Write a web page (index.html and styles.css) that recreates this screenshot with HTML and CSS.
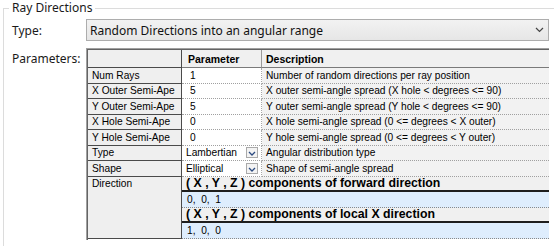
FILE: index.html
```html
<!DOCTYPE html>
<html>
<head>
<meta charset="utf-8">
<link rel="stylesheet" href="styles.css">
</head>
<body>
<fieldset class="group">
  <legend class="legend">Ray Directions</legend>
  <div class="form">
    <div class="lbl">Type:</div>
    <div class="combo">
      <span class="combo-text">Random Directions into an angular range</span>
      <svg class="combo-arrow" width="9" height="6" viewBox="0 0 9 6"><polyline points="1,1 4.5,4.5 8,1" fill="none" stroke="#444" stroke-width="1.2"/></svg>
    </div>
    <div class="lbl lbl-params">Parameters:</div>
    <div class="table">
      <div class="cell hdr rh"></div>
      <div class="cell hdr ph">Parameter</div>
      <div class="cell hdr dh">Description</div>

      <div class="cell rh">Num Rays</div>
      <div class="cell val num">1</div>
      <div class="cell desc">Number of random directions per ray position</div>

      <div class="cell rh">X Outer Semi-Ape</div>
      <div class="cell val num">5</div>
      <div class="cell desc">X outer semi-angle spread (X hole &lt; degrees &lt;= 90)</div>

      <div class="cell rh">Y Outer Semi-Ape</div>
      <div class="cell val num">5</div>
      <div class="cell desc">Y outer semi-angle spread (Y hole &lt; degrees &lt;= 90)</div>

      <div class="cell rh">X Hole Semi-Ape</div>
      <div class="cell val num">0</div>
      <div class="cell desc">X hole semi-angle spread (0 &lt;= degrees &lt; X outer)</div>

      <div class="cell rh">Y Hole Semi-Ape</div>
      <div class="cell val num">0</div>
      <div class="cell desc">Y hole semi-angle spread (0 &lt;= degrees &lt; Y outer)</div>

      <div class="cell rh">Type</div>
      <div class="cell val sel"><span class="sel-text">Lambertian</span><span class="dd"><svg width="8" height="5" viewBox="0 0 8 5"><polyline points="1,1 4,4 7,1" fill="none" stroke="#2b4a80" stroke-width="1.3"/></svg></span></div>
      <div class="cell desc">Angular distribution type</div>

      <div class="cell rh">Shape</div>
      <div class="cell val sel"><span class="sel-text">Elliptical</span><span class="dd"><svg width="8" height="5" viewBox="0 0 8 5"><polyline points="1,1 4,4 7,1" fill="none" stroke="#2b4a80" stroke-width="1.3"/></svg></span></div>
      <div class="cell desc">Shape of semi-angle spread</div>

      <div class="cell rh dir">Direction</div>
      <div class="cell sub">( X , Y , Z ) components of forward direction</div>
      <div class="cell vec">0,&nbsp; 0,&nbsp; 1</div>
      <div class="cell sub">( X , Y , Z ) components of local X direction</div>
      <div class="cell vec">1,&nbsp; 0,&nbsp; 0</div>
    </div>
  </div>
</fieldset>
</body>
</html>
```

FILE: styles.css
```css
html, body {
  margin: 0;
  padding: 0;
  background: #ffffff;
  overflow: hidden;
  width: 554px;
  height: 246px;
}

.group {
  box-sizing: border-box;
  height: 246px;
  margin: 0 0 0 3px;
  padding: 0 0 0 8px;
  border: 1px solid #dcdcdc;
  border-right: none;
  border-bottom: none;
  font-family: "Noto Sans", "Open Sans", sans-serif;
  font-size: 11.5px;
  color: #1a1a1a;
  min-width: 0;
}

.legend {
  margin-left: -3px;
  padding: 0 3px;
  line-height: 16px;
  font-size: 12px;
}

.form {
  display: grid;
  grid-template-columns: 74px 463px;
  grid-template-rows: 22px auto;
  row-gap: 7px;
  margin-top: 3px;
}

.lbl {
  display: flex;
  align-items: center;
  font-size: 12px;
}

.lbl-params {
  align-items: flex-start;
  padding-top: 3px;
  line-height: 16px;
}

.combo {
  box-sizing: border-box;
  height: 22px;
  border: 1px solid #adadad;
  background: linear-gradient(#f2f2f2, #e6e6e6);
  display: flex;
  align-items: center;
  justify-content: space-between;
  padding: 0 4px 0 3px;
  font-size: 12px;
  color: #111;
}

.combo-arrow {
  display: block;
}

.table {
  box-sizing: border-box;
  height: 192px;
  border-top: 1px solid #a0a0a0;
  border-left: 1px solid #a0a0a0;
  box-shadow: inset 1px 1px 0 #646464;
  padding: 1px 0 0 1px;
  display: grid;
  grid-template-columns: 94px 80px 1fr;
  grid-template-rows: 18px repeat(11, 15.5px);
  align-content: start;
  font-family: "Liberation Sans", Arial, sans-serif;
  font-size: 10.2px;
  color: #000;
  background: #fff;
}

.cell {
  box-sizing: border-box;
  display: flex;
  align-items: center;
  white-space: nowrap;
  overflow: hidden;
  min-width: 0;
}

.hdr {
  background: #f0f0f0;
  font-weight: bold;
  font-size: 10.5px;
  border-bottom: 1px solid #7a7a7a;
}

.rh {
  background: #efefef;
  border-right: 1px solid #4a4a4a;
  border-bottom: 1px solid #4a4a4a;
  padding-left: 4px;
}

.hdr.rh {
  border-bottom-color: #4a4a4a;
}

.ph {
  padding-left: 6px;
  border-right: 1px solid #9a9a9a;
}

.dh {
  padding-left: 4px;
}

.val {
  background: #fff;
  border-right: 1px dotted #a8a8a8;
  border-bottom: 1px dotted #a0a0a0;
}

.num {
  padding-left: 8px;
}

.sel {
  padding-left: 4px;
  padding-right: 3px;
  justify-content: space-between;
}

.dd {
  box-sizing: border-box;
  width: 12px;
  height: 11px;
  border: 1px solid #a9a9a9;
  background: #f3f3f3;
  display: flex;
  align-items: center;
  justify-content: center;
}

.dd svg {
  display: block;
  margin-top: 2px;
}

.desc {
  background: #f2f2f2;
  border-bottom: 1px dotted #a0a0a0;
  padding-left: 4px;
}

.dir {
  grid-row: span 4;
  align-items: flex-start;
  padding-top: 1px;
}

.sub {
  grid-column: span 2;
  background: #f0f0f0;
  font-weight: bold;
  font-size: 12.3px;
  padding-left: 4px;
  border-bottom: 2px solid #1e1e1e;
}

.vec {
  grid-column: span 2;
  background: #deedfd;
  border-bottom: 1px dotted #8a8a8a;
  padding-left: 5px;
}
```
